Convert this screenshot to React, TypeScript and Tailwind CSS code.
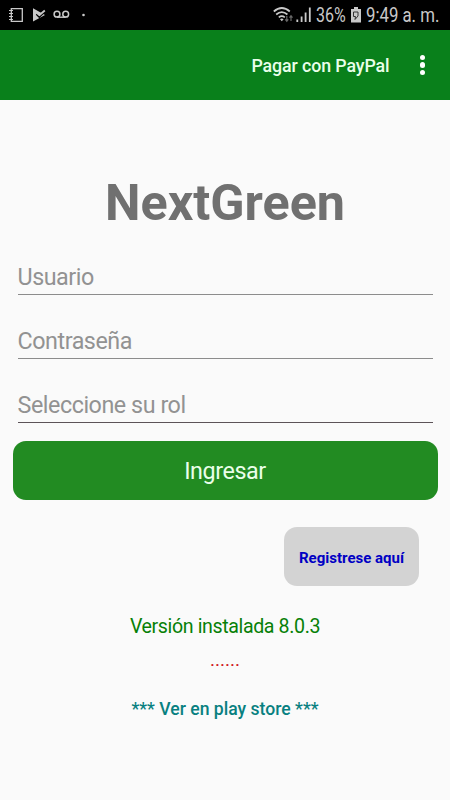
import { useState } from 'react';

interface FieldProps {
  placeholder: string;
  type?: string;
  className?: string;
}

function Field({ placeholder, type = 'text', className = 'border-[#8c8c8c]' }: FieldProps) {
  const [value, setValue] = useState('');

  return (
    <input
      type={type}
      value={value}
      onChange={(e) => setValue(e.target.value)}
      placeholder={placeholder}
      className={`block h-9 w-full border-b bg-transparent text-[23.3px] tracking-[-0.45px] text-[#333] outline-none placeholder:text-[#929292] ${className}`}
    />
  );
}

function StatusBar() {
  return (
    <div className="flex h-[30px] items-center bg-black text-[#c9c9c9]">
      {/* Notifications */}
      <svg className="ml-2 h-[30px] w-[80px]" viewBox="0 0 80 30" fill="none" stroke="currentColor">
        <path d="M3.3 8.6h11v12.8h-11z" strokeWidth="1.3" />
        <path d="M1 10.5h4M1 13.5h4M1 16.5h4M1 19.5h4" strokeWidth="1.2" />
        <path d="M25 8.2l12 6.8-12 6.6z" fill="currentColor" stroke="none" />
        <path d="M28.3 14.2l3 3 6-6" stroke="#000" strokeWidth="1.5" />
        <path d="M28 12l3.5 3 5.3-4.5" strokeWidth="1.8" />
        <circle cx="49" cy="14.2" r="2.9" strokeWidth="1.5" />
        <circle cx="57.7" cy="14.2" r="2.9" strokeWidth="1.5" />
        <path d="M49 17.2h8.7" strokeWidth="1.4" />
        <circle cx="75.5" cy="15" r="1.3" fill="currentColor" stroke="none" />
      </svg>

      {/* Wifi and signal */}
      <svg className="ml-auto h-[30px] w-[43px]" viewBox="0 0 43 30" fill="none" stroke="currentColor">
        <path d="M.8 11.5q8-7 16 0M3.2 14.5q5.6-4.8 11.2 0M5.8 17.3q3-2.5 6 0" strokeWidth="1.7" />
        <path d="M7 19.2q1.8-1.2 3.6 0l-1.8 2z" fill="currentColor" stroke="none" />
        <path d="M13.8 16v5m-1.5-1.7l1.5 1.9 1.5-1.9M18 21v-5m-1.5 1.7l1.5-1.9 1.5 1.9" stroke="#686868" strokeWidth="1.2" />
        <path d="M24.3 19.5V22M28.6 16.5V22M32.6 12.5V22M36.8 7.5V22" strokeWidth="1.8" />
      </svg>
      <span className="w-[30px] text-[19.5px] leading-[30px] whitespace-nowrap">
        <span className="inline-block origin-left translate-y-[0.5px] scale-x-[0.82]">36%</span>
      </span>
      <svg className="ml-[5px] h-[30px] w-[10px] shrink-0" viewBox="0 0 10 30">
        <path d="M3 7h4v2h3v13.5H0V9h3z" fill="currentColor" />
        <path d="M2.5 12h4.5v4l-3 3.5.5-3h-2z" fill="none" stroke="#333" />
      </svg>
      <span className="mr-[10px] ml-[5px] w-[74px] text-[19.5px] leading-[30px] whitespace-nowrap">
        <span className="inline-block origin-left translate-y-[0.5px] scale-x-[0.86]">9:49 a. m.</span>
      </span>
    </div>
  );
}

export default function App() {
  return (
    <div className="flex h-[800px] w-[450px] flex-col bg-[#fafafa] font-[Roboto,sans-serif]">
      <StatusBar />

      {/* Toolbar */}
      <header className="flex h-[70px] items-center justify-end bg-[#09801b] text-white">
        <button className="pt-[2px] text-[17.8px] font-medium tracking-[-0.1px] text-[#eaffea]">Pagar con PayPal</button>
        <button className="mr-[25px] ml-[30px] flex flex-col gap-[2px]" aria-label="Menu">
          <span className="h-[5.5px] w-[5.5px] rounded-full bg-white" />
          <span className="h-[5.5px] w-[5.5px] rounded-full bg-white" />
          <span className="h-[5.5px] w-[5.5px] rounded-full bg-white" />
        </button>
      </header>

      <main className="flex flex-col px-3">
        <h1 className="mt-[73px] text-center text-[50.3px] leading-[60px] font-bold text-[#707070]">NextGreen</h1>

        <form className="mt-[26px] flex flex-col" onSubmit={(e) => e.preventDefault()}>
          <div className="flex flex-col gap-7 pr-[5px] pl-[5.5px]">
            <Field placeholder="Usuario" />
            <Field placeholder="Contraseña" type="password" />
            <Field placeholder="Seleccione su rol" className="border-[#5c5358]" />
          </div>
          <button className="mt-[17.6px] h-[59.5px] w-[425px] self-center rounded-[13px] bg-[#228b22] pt-[3px] text-[23.3px] tracking-[-0.4px] text-[#eaffea]">
            Ingresar
          </button>
        </form>

        <button className="mt-[26.5px] mr-[19px] h-[59.5px] w-[135px] self-end rounded-[13px] bg-[#d3d3d3] pt-[3px] text-[15px] font-bold text-[#0000c4]">
          Registrese aquí
        </button>

        {/* Version info */}
        <p className="mt-[29.4px] text-center text-[19.6px] leading-6 tracking-[-0.38px] text-[#078007]">
          Versión instalada 8.0.3
        </p>
        <p className="mt-[9px] text-center text-[19px] leading-6 text-[#d01818]">......</p>
        <p className="mt-[25px] text-center text-[17.6px] leading-6 font-medium text-[#088080]">*** Ver en play store ***</p>
      </main>
    </div>
  );
}
